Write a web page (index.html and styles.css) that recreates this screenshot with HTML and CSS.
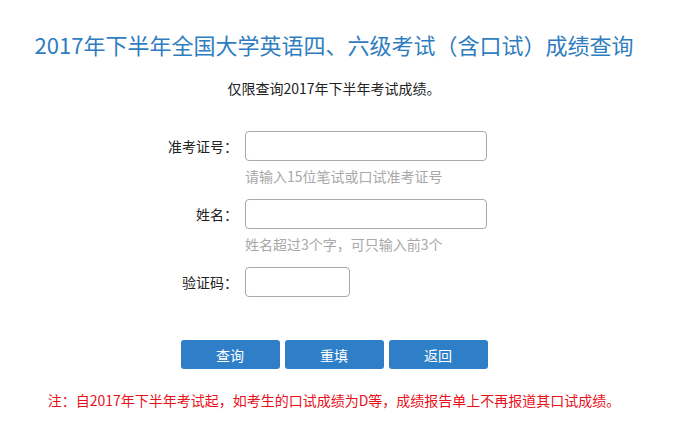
FILE: index.html
```html
<!DOCTYPE html>
<html lang="zh-CN">
<head>
    <meta charset="UTF-8">
    <meta name="viewport" content="width=device-width, initial-scale=1.0">
    <title>2017年下半年全国大学英语四、六级考试（含口试）成绩查询</title>
    <link rel="stylesheet" href="styles.css">
</head>
<body>
    <div class="page">
        <h1>2017年下半年全国大学英语四、六级考试（含口试）成绩查询</h1>
        <p class="tip">仅限查询2017年下半年考试成绩。</p>

        <!-- 查询表单 -->
        <form class="fields" onsubmit="return false;">
            <div class="row">
                <label for="zkzh">准考证号：</label>
                <input type="text" id="zkzh" class="input" maxlength="15">
            </div>
            <p class="hint">请输入15位笔试或口试准考证号</p>

            <div class="row">
                <label for="xm">姓名：</label>
                <input type="text" id="xm" class="input">
            </div>
            <p class="hint">姓名超过3个字，可只输入前3个</p>

            <div class="row">
                <label for="yzm">验证码：</label>
                <input type="text" id="yzm" class="input input-small" maxlength="4">
            </div>
        </form>

        <div class="buttons">
            <button class="btn" type="button">查询</button>
            <button class="btn" type="reset">重填</button>
            <button class="btn" type="button">返回</button>
        </div>

        <p class="note">注：自2017年下半年考试起，如考生的口试成绩为D等，成绩报告单上不再报道其口试成绩。</p>
    </div>
</body>
</html>
```

FILE: styles.css
```css
body {
    margin: 0;
    font-family: "Microsoft YaHei", "Noto Sans CJK SC", sans-serif;
    color: #222;
    background-color: #fff;
}

.page {
    padding-right: 9px;
}

h1 {
    margin: 0;
    padding-top: 29px;
    font-size: 22px;
    line-height: 30px;
    font-weight: normal;
    color: #2f7dc0;
    text-align: center;
}

.tip {
    margin: 19px 0 0;
    font-size: 14px;
    line-height: 20px;
    text-align: center;
}

.fields {
    width: 390px;
    margin: 33px auto 0;
}

.row {
    display: flex;
    align-items: center;
}

.row label {
    width: 99px;
    margin-right: 7px;
    text-align: right;
    font-size: 14px;
}

.input {
    width: 242px;
    height: 30px;
    box-sizing: border-box;
    border: 1px solid #a9a9a9;
    border-radius: 4px;
    padding: 0 6px;
    font-size: 14px;
    outline: none;
}

.input-small {
    width: 105px;
}

.hint {
    margin: 5px 0 13px;
    padding-left: 106px;
    font-size: 14px;
    line-height: 20px;
    color: #a8a8a8;
}

.buttons {
    display: flex;
    justify-content: center;
    gap: 5px;
    margin-top: 43px;
}

.btn {
    width: 99px;
    height: 29px;
    border: none;
    border-radius: 3px;
    background-color: #2f7fc8;
    color: #fff;
    font-family: inherit;
    font-size: 14px;
    cursor: pointer;
}

.btn:hover {
    background-color: #256fb3;
}

.note {
    margin: 20px 0 0;
    font-size: 14px;
    line-height: 22px;
    color: #e8101b;
    text-align: center;
}
```
